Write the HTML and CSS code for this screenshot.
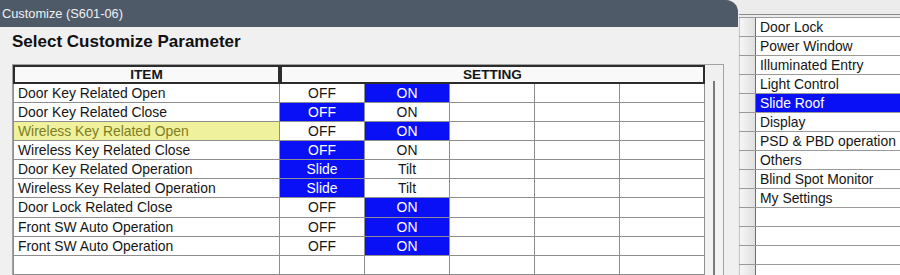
FILE: index.html
```html
<!DOCTYPE html>
<html lang="en">
<head>
  <meta charset="UTF-8" />
  <title>Customize (S601-06)</title>
  <link rel="stylesheet" href="styles.css">
</head>
<body>
  <div class="window">
    <div class="titlebar">Customize (S601-06)</div>
    <div class="window-body">
      <h2>Select Customize Parameter</h2>
      <div class="frame">
        <div class="grid">
          <div class="head">
            <div class="hcell">ITEM</div>
            <div class="hcell">SETTING</div>
          </div>
          <div class="row">
            <div class="item">Door Key Related Open</div>
            <div class="opt">OFF</div><div class="opt sel">ON</div><div class="opt"></div><div class="opt"></div><div class="opt"></div>
          </div>
          <div class="row">
            <div class="item">Door Key Related Close</div>
            <div class="opt sel">OFF</div><div class="opt">ON</div><div class="opt"></div><div class="opt"></div><div class="opt"></div>
          </div>
          <div class="row">
            <div class="item hl">Wireless Key Related Open</div>
            <div class="opt">OFF</div><div class="opt sel">ON</div><div class="opt"></div><div class="opt"></div><div class="opt"></div>
          </div>
          <div class="row">
            <div class="item">Wireless Key Related Close</div>
            <div class="opt sel">OFF</div><div class="opt">ON</div><div class="opt"></div><div class="opt"></div><div class="opt"></div>
          </div>
          <div class="row">
            <div class="item">Door Key Related Operation</div>
            <div class="opt sel">Slide</div><div class="opt">Tilt</div><div class="opt"></div><div class="opt"></div><div class="opt"></div>
          </div>
          <div class="row">
            <div class="item">Wireless Key Related Operation</div>
            <div class="opt sel">Slide</div><div class="opt">Tilt</div><div class="opt"></div><div class="opt"></div><div class="opt"></div>
          </div>
          <div class="row">
            <div class="item">Door Lock Related Close</div>
            <div class="opt">OFF</div><div class="opt sel">ON</div><div class="opt"></div><div class="opt"></div><div class="opt"></div>
          </div>
          <div class="row">
            <div class="item">Front SW Auto Operation</div>
            <div class="opt">OFF</div><div class="opt sel">ON</div><div class="opt"></div><div class="opt"></div><div class="opt"></div>
          </div>
          <div class="row">
            <div class="item">Front SW Auto Operation</div>
            <div class="opt">OFF</div><div class="opt sel">ON</div><div class="opt"></div><div class="opt"></div><div class="opt"></div>
          </div>
          <div class="row">
            <div class="item"></div>
            <div class="opt"></div><div class="opt"></div><div class="opt"></div><div class="opt"></div><div class="opt"></div>
          </div>
          <div class="row">
            <div class="item"></div>
            <div class="opt"></div><div class="opt"></div><div class="opt"></div><div class="opt"></div><div class="opt"></div>
          </div>
        </div>
        <div class="scrollbar"></div>
      </div>
    </div>
  </div>

  <div class="side">
    <div class="side-head"></div>
    <div class="side-list">
      <div class="side-row"><span class="nub"></span><span class="name">Door Lock</span></div>
      <div class="side-row"><span class="nub"></span><span class="name">Power Window</span></div>
      <div class="side-row"><span class="nub"></span><span class="name">Illuminated Entry</span></div>
      <div class="side-row"><span class="nub"></span><span class="name">Light Control</span></div>
      <div class="side-row"><span class="nub"></span><span class="name active">Slide Roof</span></div>
      <div class="side-row"><span class="nub"></span><span class="name">Display</span></div>
      <div class="side-row"><span class="nub"></span><span class="name">PSD &amp; PBD operation</span></div>
      <div class="side-row"><span class="nub"></span><span class="name">Others</span></div>
      <div class="side-row"><span class="nub"></span><span class="name">Blind Spot Monitor</span></div>
      <div class="side-row"><span class="nub"></span><span class="name">My Settings</span></div>
      <div class="side-row"><span class="nub"></span><span class="name"></span></div>
      <div class="side-row"><span class="nub"></span><span class="name"></span></div>
      <div class="side-row"><span class="nub"></span><span class="name"></span></div>
      <div class="side-row"><span class="nub"></span><span class="name"></span></div>
    </div>
  </div>
</body>
</html>
```

FILE: styles.css
```css
* {
  box-sizing: border-box;
  margin: 0;
  padding: 0;
}

body {
  width: 900px;
  height: 275px;
  overflow: hidden;
  display: flex;
  background-color: #ececec;
  font-family: "Liberation Sans", Arial, sans-serif;
  font-size: 13.9px;
  color: #151515;
}

/* Customize window */
.window {
  width: 738px;
  flex-shrink: 0;
  display: flex;
  flex-direction: column;
  overflow: hidden;
}

.titlebar {
  height: 27px;
  line-height: 27px;
  padding-left: 2px;
  background-color: #4e5a68;
  border-radius: 0 12px 0 0;
  color: #eef0f3;
  font-size: 12.8px;
}

.window-body {
  flex: 1;
  background-color: #f0f0f0;
  padding: 5px 0 0 12px;
  overflow: hidden;
}

h2 {
  font-size: 17px;
  line-height: 20px;
  font-weight: bold;
  color: #111;
  margin-bottom: 12px;
}

.frame {
  display: flex;
  width: 712px;
  border: 1px solid #a2a2a2;
  border-bottom: none;
  background-color: #f0f0f0;
}

.grid {
  width: 692px;
}

.head {
  display: grid;
  grid-template-columns: 267px 425px;
  height: 19px;
}

.hcell {
  border: 2px solid #2c2c2c;
  background-color: #f9f9f9;
  text-align: center;
  font-weight: bold;
  line-height: 15px;
  font-size: 13.6px;
}

.row {
  display: grid;
  grid-template-columns: 267px repeat(5, 85px);
  height: 19.08px;
}

.row > div {
  border-right: 1px solid #8e8e8e;
  border-bottom: 1px solid #8e8e8e;
  background-color: #fff;
  line-height: 18px;
  white-space: nowrap;
}

.row .item {
  border-left: 1px solid #8e8e8e;
  padding-left: 4px;
}

.row .item.hl {
  background-color: #eff19c;
  color: #7d7d22;
}

.row .opt {
  text-align: center;
}

.row .opt.sel {
  background-color: #0a10f5;
  color: #fff;
}

.scrollbar {
  width: 18px;
  margin-top: 16px;
  background: linear-gradient(to right, #f3f3f3 0, #f3f3f3 8px, #7a7a7a 8px, #7a7a7a 10px, #f3f3f3 10px);
}

/* Category list behind the window */
.side {
  flex: 1;
  padding-left: 1px;
  overflow: hidden;
}

.side-head {
  height: 15px;
  border-bottom: 1px solid #8a8a8a;
  margin-bottom: 2px;
}

.side-list {
  border-top: 1px solid #9a9a9a;
}

.side-row {
  display: grid;
  grid-template-columns: 17px 1fr;
  height: 19.04px;
  border-bottom: 1px solid #9a9a9a;
}

.nub {
  border-left: 1px solid #c6c6c6;
  border-right: 1px solid #6e6e6e;
  background: linear-gradient(to right, #f6f6f6, #e0e0e0);
}

.name {
  background-color: #fff;
  padding-left: 4px;
  line-height: 18px;
  white-space: nowrap;
}

.name.active {
  background-color: #0a10f5;
  color: #fff;
}
```
